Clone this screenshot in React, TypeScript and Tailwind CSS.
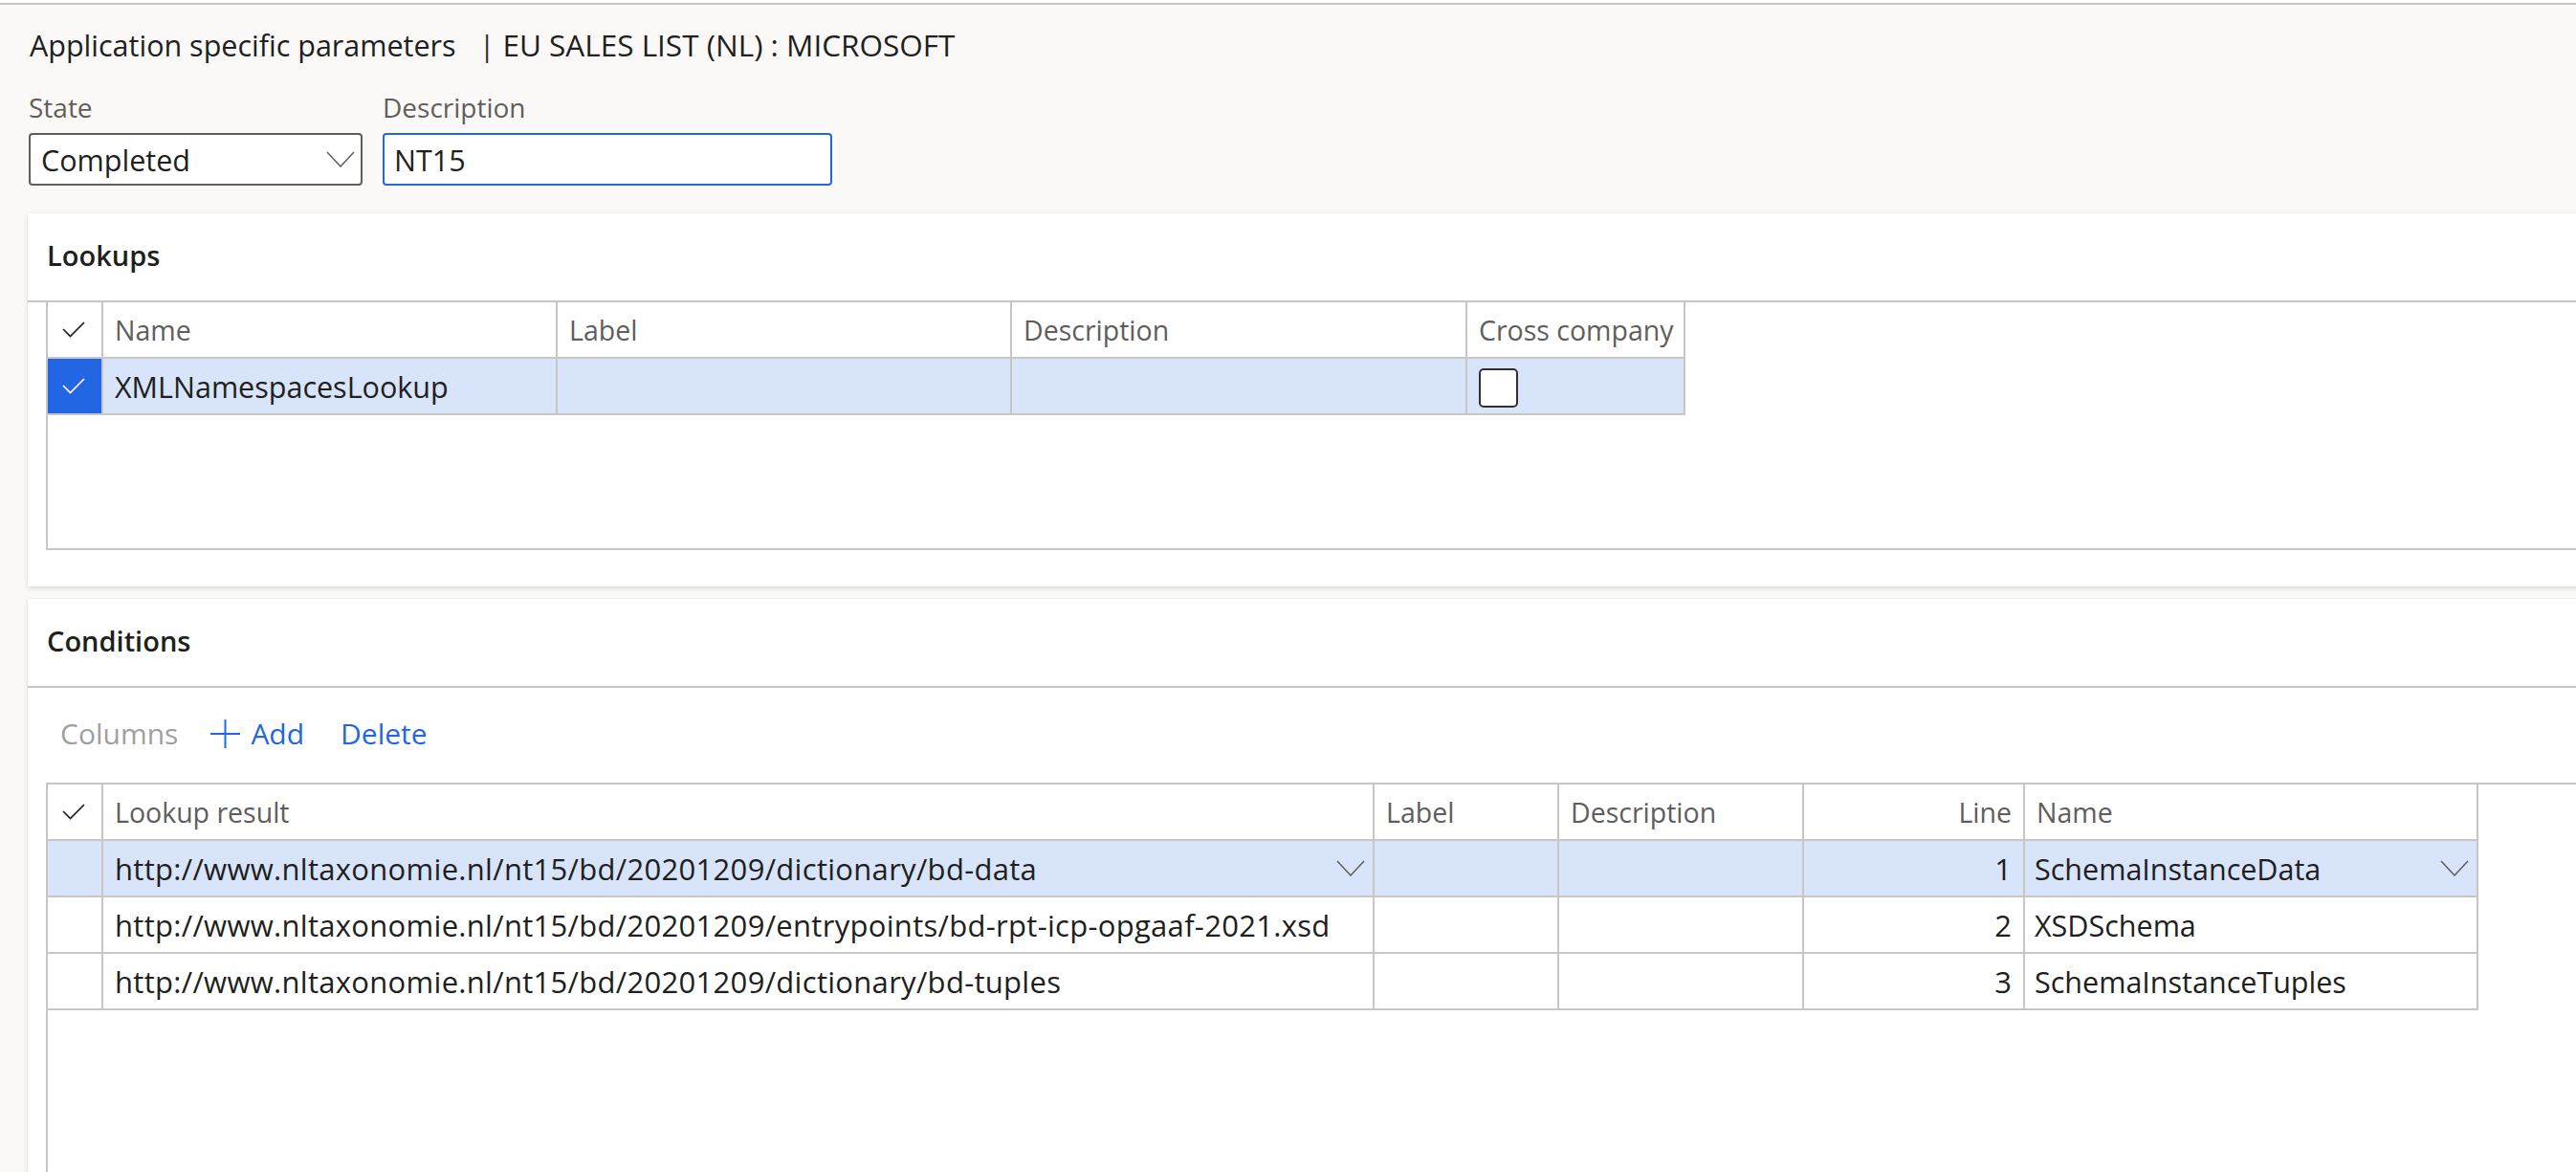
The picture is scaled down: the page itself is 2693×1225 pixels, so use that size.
import React from "react";

// Thin Fluent-style chevron used by dropdown fields and grid lookup cells
function Chevron({ w, h }: { w: number; h: number }) {
  return (
    <svg width={w} height={h} viewBox={`0 0 ${w} ${h}`} fill="none">
      <polyline
        points={`1,1 ${w / 2},${h - 1} ${w - 1},1`}
        stroke="#605e5c"
        strokeWidth={1.5}
        strokeLinejoin="miter"
      />
    </svg>
  );
}

function Check({ color }: { color: string }) {
  return (
    <svg width="24" height="17" viewBox="0 0 24 17" fill="none">
      <polyline points="1,8 8.5,15.5 23,1" stroke={color} strokeWidth={1.7} />
    </svg>
  );
}

function Plus() {
  return (
    <svg width="31" height="30" viewBox="0 0 31 30" fill="none">
      <path d="M15.5 0 V30 M0 15 H31" stroke="#2266e3" strokeWidth={2} />
    </svg>
  );
}

type Col = { key: string; label: string; width: number; align?: "right" };

const lookupCols: Col[] = [
  { key: "name", label: "Name", width: 475 },
  { key: "label", label: "Label", width: 475 },
  { key: "description", label: "Description", width: 476 },
  { key: "cross", label: "Cross company", width: 228 },
];

const conditionCols: Col[] = [
  { key: "result", label: "Lookup result", width: 1329 },
  { key: "label", label: "Label", width: 193 },
  { key: "description", label: "Description", width: 256 },
  { key: "line", label: "Line", width: 231, align: "right" },
  { key: "name", label: "Name", width: 474 },
];

const conditionRows = [
  {
    result: "http://www.nltaxonomie.nl/nt15/bd/20201209/dictionary/bd-data",
    line: "1",
    name: "SchemaInstanceData",
  },
  {
    result: "http://www.nltaxonomie.nl/nt15/bd/20201209/entrypoints/bd-rpt-icp-opgaaf-2021.xsd",
    line: "2",
    name: "XSDSchema",
  },
  {
    result: "http://www.nltaxonomie.nl/nt15/bd/20201209/dictionary/bd-tuples",
    line: "3",
    name: "SchemaInstanceTuples",
  },
];

function HeaderRow({ cols }: { cols: Col[] }) {
  return (
    <div className="flex h-[59px] w-max border-b-2 border-[#c8c6c4]">
      <div className="flex w-[58px] items-center justify-center border-r-2 border-[#c8c6c4] pr-[2px]">
        <Check color="#201f1e" />
      </div>
      {cols.map((c) => (
        <div
          key={c.key}
          style={{ width: c.width }}
          className={`flex items-center border-r-2 border-[#c8c6c4] px-[12px] text-[28.5px] leading-[36px] whitespace-nowrap text-[#605e5c] ${
            c.align === "right" ? "justify-end" : ""
          }`}
        >
          {c.label}
        </div>
      ))}
    </div>
  );
}

function Card({ title, children, className = "" }: { title: string; children: React.ReactNode; className?: string }) {
  return (
    <section
      className={`-mr-[20px] ml-[29px] bg-white shadow-[0_2px_5px_rgba(0,0,0,0.12),0_0_1px_rgba(0,0,0,0.12)] ${className}`}
    >
      <div className="h-[93px] border-b-2 border-[#c8c6c4] pl-[20px] pt-[24px]">
        <h2 className="text-[29px] leading-[40px] font-semibold text-[#201f1e]">{title}</h2>
      </div>
      {children}
    </section>
  );
}

export default function App() {
  return (
    <div className="h-[1225px] w-[2693px] overflow-hidden bg-[#faf9f8] font-['Open_Sans','Noto_Sans',sans-serif] text-[#201f1e]">
      <div className="h-[3px] bg-white" />
      <div className="h-[2px] bg-[#c8c6c4]" />

      {/* Page header with the form fields */}
      <div className="pl-[30px] pt-[22px]">
        <h1 className="flex h-[40px] items-center pl-[1px] text-[30.5px] leading-[40px] whitespace-nowrap">
          <span>Application specific parameters</span>
          <span className="ml-[24px] mr-[8px] text-[#323130]">|</span>
          <span className="text-[31.5px]">EU SALES LIST (NL) : MICROSOFT</span>
        </h1>

        <div className="mt-[27px] flex gap-[21px]">
          <div className="flex w-[349px] flex-col">
            <label className="text-[28px] leading-[36px] text-[#605e5c]">State</label>
            <div className="mt-[9px] flex h-[55px] items-center justify-between rounded-[4px] border-2 border-[#605e5c] bg-white pl-[11px] pr-[6px]">
              <span className="text-[30.5px] leading-[40px]">Completed</span>
              <Chevron w={30} h={17} />
            </div>
          </div>
          <div className="flex w-[470px] flex-col">
            <label className="text-[28px] leading-[36px] text-[#605e5c]">Description</label>
            <div className="mt-[9px] flex h-[55px] items-center rounded-[4px] border-2 border-[#2266e3] bg-white pl-[10px]">
              <span className="text-[30.5px] leading-[40px]">NT15</span>
            </div>
          </div>
        </div>
      </div>

      {/* Lookups */}
      <Card title="Lookups" className="mt-[29px] pb-[38px]">
        <div className="ml-[19px] flex h-[259px] flex-col border-b-2 border-l-2 border-[#c8c6c4]">
          <HeaderRow cols={lookupCols} />
          <div className="flex h-[59px] w-max border-b-2 border-[#c8c6c4] bg-[#d8e4f9]">
            <div className="flex w-[58px] items-center justify-center border-r-2 border-[#c8c6c4] bg-[#2266e3] pr-[2px]">
              <Check color="#ffffff" />
            </div>
            <div className="flex w-[475px] items-center border-r-2 border-[#c8c6c4] px-[12px] text-[30.5px] leading-[40px]">
              XMLNamespacesLookup
            </div>
            <div className="w-[475px] border-r-2 border-[#c8c6c4]" />
            <div className="w-[476px] border-r-2 border-[#c8c6c4]" />
            <div className="flex w-[228px] items-center border-r-2 border-[#c8c6c4] pl-[12px] pt-[4px]">
              <div className="h-[41px] w-[41px] rounded-[5px] border-2 border-[#323130] bg-white" />
            </div>
          </div>
        </div>
      </Card>

      {/* Conditions */}
      <Card title="Conditions" className="mt-[13px] h-[620px]">
        <div className="mt-[28px] flex h-[40px] items-center pl-[34px] text-[30px] leading-[40px] whitespace-nowrap">
          <span className="text-[#a19f9d]">Columns</span>
          <span className="ml-[34px] flex items-center">
            <Plus />
          </span>
          <span className="ml-[11px] text-[#2266e3]">Add</span>
          <span className="ml-[38px] text-[#2266e3]">Delete</span>
        </div>

        <div className="ml-[19px] mt-[31px] h-[500px] border-l-2 border-t-2 border-[#c8c6c4]">
          <HeaderRow cols={conditionCols} />
          {conditionRows.map((r, i) => {
            const selected = i === 0;
            return (
              <div
                key={r.line}
                className={`flex h-[59px] w-max border-b-2 border-[#c8c6c4] ${selected ? "bg-[#d8e4f9]" : ""}`}
              >
                <div className="w-[58px] border-r-2 border-[#c8c6c4]" />
                <div className="flex w-[1329px] items-center justify-between border-r-2 border-[#c8c6c4] pl-[12px] pr-[8px] text-[31px] leading-[40px] tracking-[0.3px] whitespace-nowrap">
                  <span>{r.result}</span>
                  {selected && <Chevron w={30} h={17} />}
                </div>
                <div className="w-[193px] border-r-2 border-[#c8c6c4]" />
                <div className="w-[256px] border-r-2 border-[#c8c6c4]" />
                <div className="flex w-[231px] items-center justify-end border-r-2 border-[#c8c6c4] pr-[12px] text-[31px] leading-[40px]">
                  {r.line}
                </div>
                <div className="flex w-[474px] items-center justify-between border-r-2 border-[#c8c6c4] pl-[10px] pr-[8px] text-[30.5px] leading-[40px] whitespace-nowrap">
                  <span>{r.name}</span>
                  {selected && <Chevron w={30} h={17} />}
                </div>
              </div>
            );
          })}
        </div>
      </Card>
    </div>
  );
}
